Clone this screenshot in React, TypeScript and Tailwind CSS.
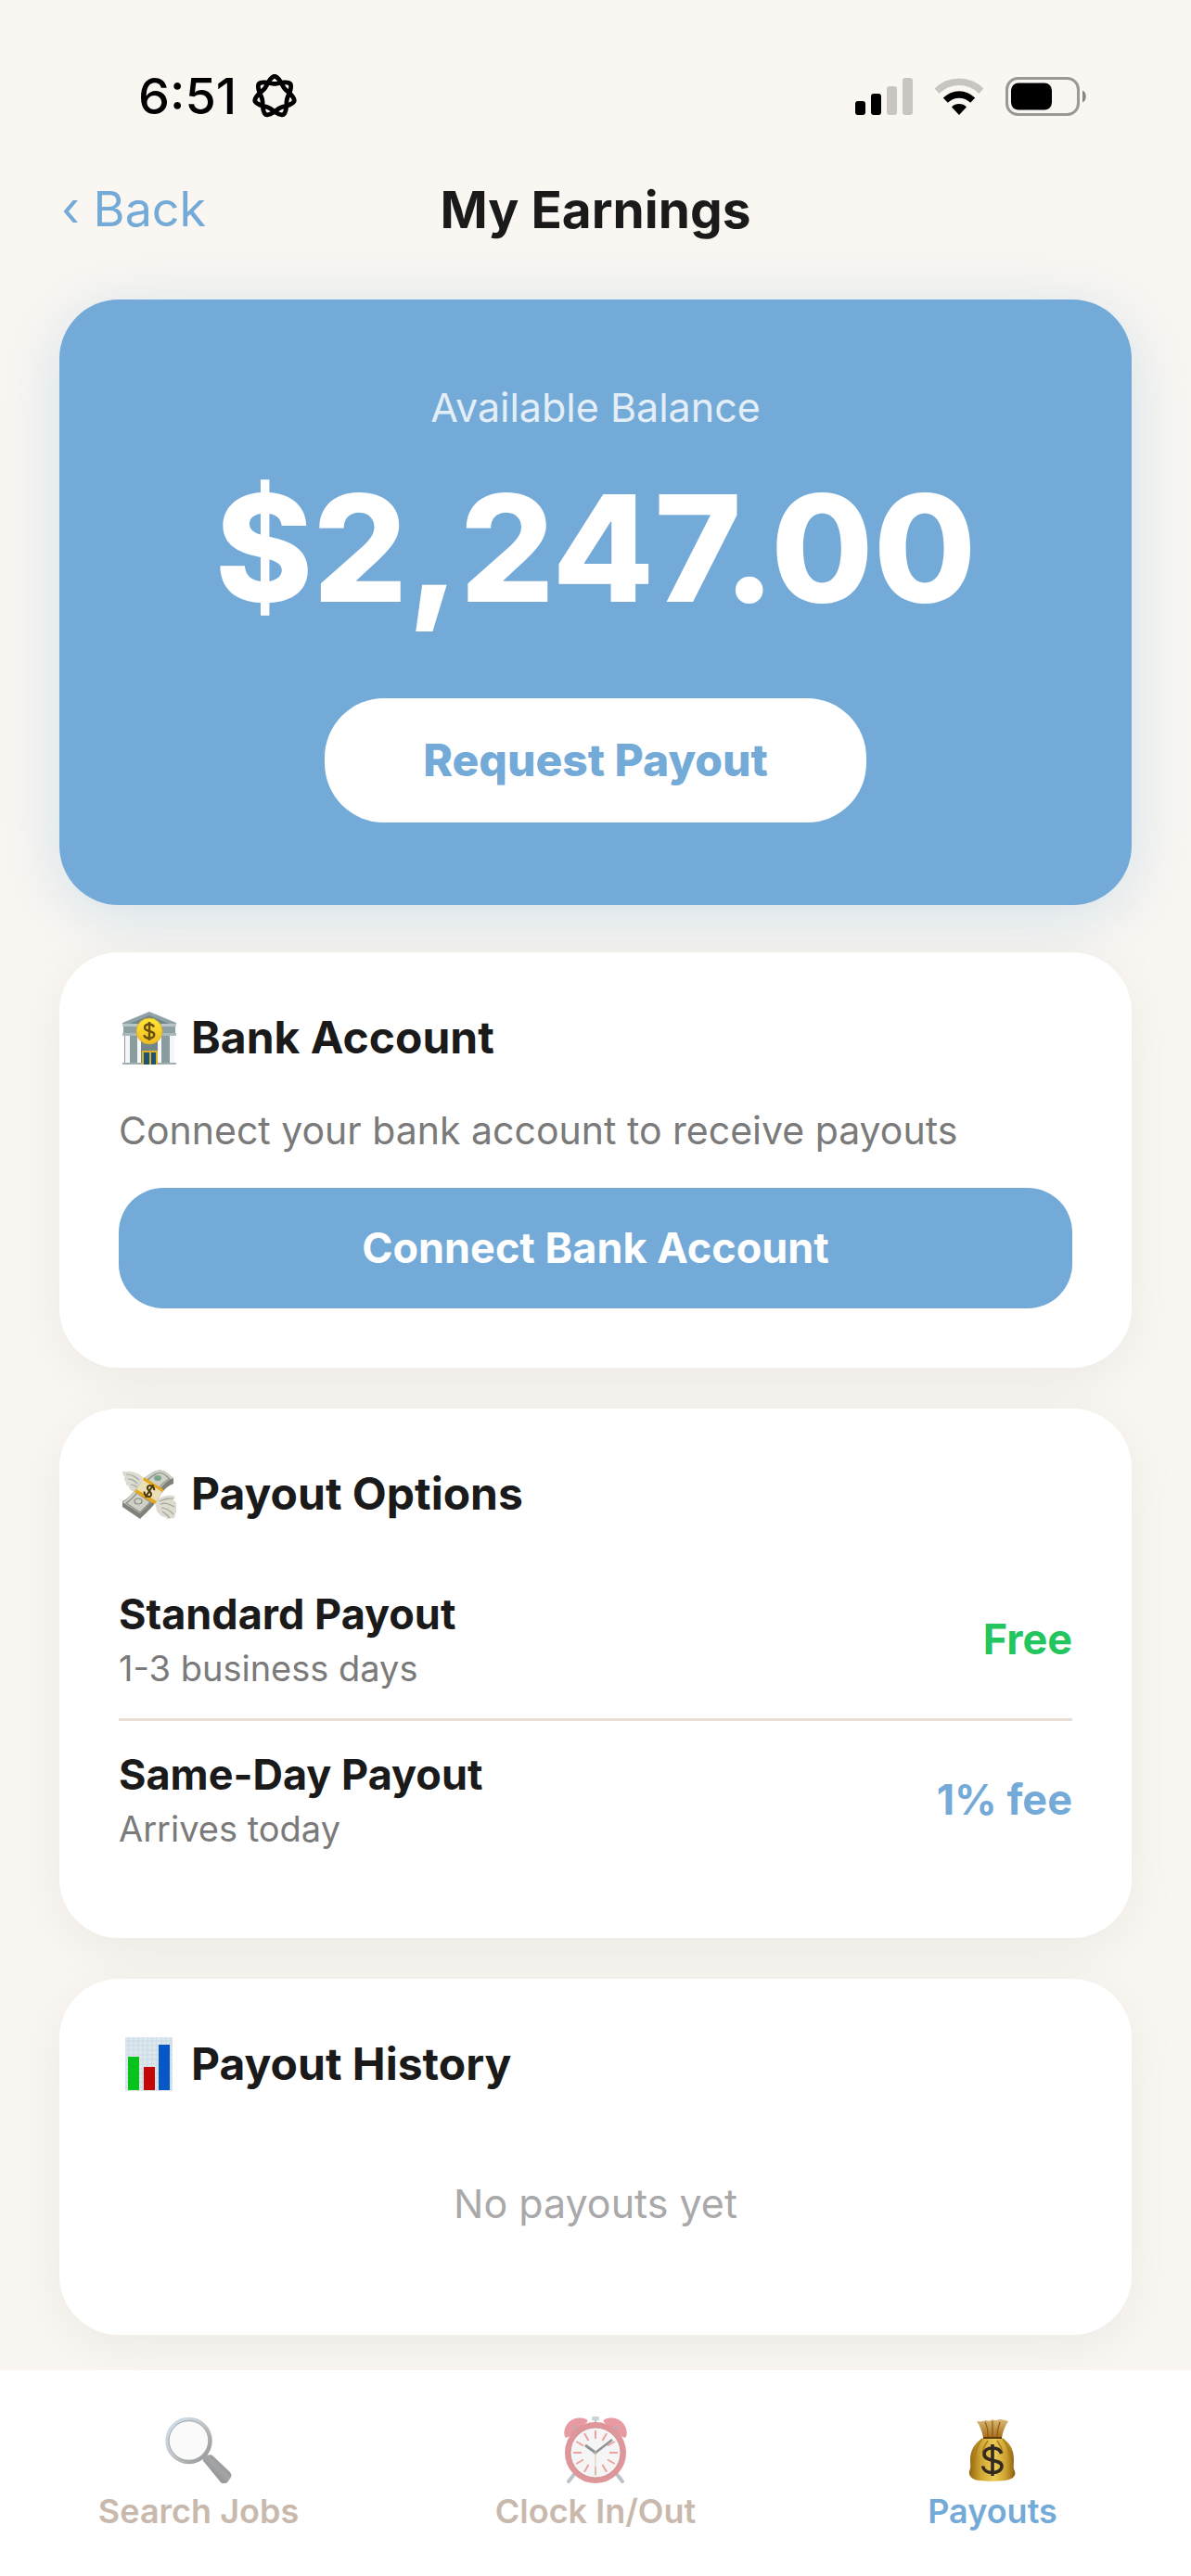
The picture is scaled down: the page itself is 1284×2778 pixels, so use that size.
import type { ReactNode } from 'react';
import { clsx } from 'clsx';

interface PayoutOption {
  title: string;
  detail: string;
  price: string;
  free?: boolean;
}

const payoutOptions: PayoutOption[] = [
  { title: 'Standard Payout', detail: '1-3 business days', price: 'Free', free: true },
  { title: 'Same-Day Payout', detail: 'Arrives today', price: '1% fee' },
];

// seven-lobed closed knot, two turns around the centre
const knotPath =
  Array.from({ length: 281 }, (_, i) => {
    const t = (i / 280) * Math.PI * 4;
    const phase = 3.5 * t;
    const angle = t - 0.24 * Math.sin(phase) - Math.PI / 2;
    const r = 18.6 + 4 * Math.cos(phase) - 0.9 * Math.cos(2 * phase);
    return `${i === 0 ? 'M' : 'L'}${(25 + r * Math.cos(angle)).toFixed(2)} ${(25 + r * Math.sin(angle)).toFixed(2)}`;
  }).join('') + 'Z';

function KnotIcon() {
  return (
    <svg viewBox="0 0 50 50" className="size-[50px]" aria-hidden="true">
      <path d={knotPath} fill="none" stroke="#000" strokeWidth="4.8" strokeLinejoin="round" />
    </svg>
  );
}

function SignalIcon() {
  return (
    <svg viewBox="0 0 62 40" className="h-10 w-[62px]" aria-hidden="true">
      <rect x="0" y="25" width="11" height="15" rx="3" />
      <rect x="17" y="17" width="11" height="23" rx="3" />
      <rect x="34" y="9" width="11" height="31" rx="3" fill="#c9c6c1" />
      <rect x="51" y="0" width="11" height="40" rx="3" fill="#c9c6c1" />
    </svg>
  );
}

function WifiIcon() {
  return (
    <svg viewBox="0 0 54 40" className="h-10 w-[54px]" aria-hidden="true">
      <path d="M0.6 11.4a37.4 37.4 0 0 1 52.8 0l-5 5.6a30 30 0 0 0-42.8 0z" fill="#c9c6c1" />
      <path d="M9.8 21.4a24.4 24.4 0 0 1 34.4 0l-5 5.4a17 17 0 0 0-24.4 0z" />
      <path d="M19 31.4a11.4 11.4 0 0 1 16 0L27 40z" />
    </svg>
  );
}

function BatteryIcon() {
  return (
    <svg viewBox="0 0 88 42" className="h-[42px] w-[88px]" aria-hidden="true">
      <rect x="1.5" y="1.5" width="77" height="39" rx="12" fill="none" stroke="#9b9995" strokeWidth="3" />
      <rect x="6" y="6.5" width="44" height="29" rx="8" />
      <path d="M83 14.500c5 2 5 11 0 13z" fill="#8a8884" />
    </svg>
  );
}

function BankIcon() {
  return (
    <svg viewBox="0 0 60 60" className="size-[60px]" aria-hidden="true">
      <defs>
        <linearGradient id="bankCoin" x1="0" y1="0" x2="0" y2="1">
          <stop offset="0" stopColor="#ffe83a" />
          <stop offset="1" stopColor="#eebb22" />
        </linearGradient>
      </defs>
      <path d="M31 2 60 14v4H2v-4z" fill="#8fa3a6" />
      <path d="M31 6 52 15H10z" fill="#6f8588" />
      <path d="M2 15h58v3H2z" fill="#b9c6c8" />
      <path d="M3 18h56v9H3z" fill="#8da1a4" />
      <path d="M2 25h58v3H2z" fill="#a9b8ba" />
      <path d="M4 28h54v30H4z" fill="#8a9c9f" />
      <path d="M22 28h18v30H22z" fill="#71868a" />
      <path d="M5 28h5v30H5zM18 28h4v30h-4zM40 28h4v30h-4zM53 28h5v30h-5z" fill="#f4f6f7" />
      <path d="M2 57h58v2H2z" fill="#9fb0b2" />
      <path d="M23 44h17v15H23z" fill="#e0b221" />
      <path d="M25 46h6v13h-6zM33 46h5v13h-5z" fill="#1d5379" />
      <circle cx="31" cy="23" r="14" fill="url(#bankCoin)" stroke="#dcae2a" strokeWidth="1" />
      <path d="M31 13v20M36 18.500c-1-2-2.800-3-5-3-3 0-5 1.600-5 3.700 0 5 10.300 2.600 10.300 7.600 0 2.200-2.200 3.900-5.300 3.900-2.800 0-5-1.200-5.700-3.600" fill="none" stroke="#6b4d0c" strokeWidth="2.400" />
    </svg>
  );
}

function FlyingMoneyIcon() {
  return (
    <svg viewBox="0 0 60 60" className="size-[60px]" aria-hidden="true">
      <path d="M24 12C18 6 10 5 2 6c0 3 1 5 3 6-2 1-1 4 1 5-1 2 0 4 3 5 0 3 3 5 6 6l5 1z" fill="#dcdbd2" />
      <path d="M6 9c6 0 9 2 14 6M8 14c5 0 7 2 10 5M11 20c3 0 5 1 7 3" fill="none" stroke="#a5a498" strokeWidth="1.200" />
      <path d="M37 38c5-4 13-8 21-6 1 3 0 4-2 4 5 3 5 6 4 8 1 4 0 6-1 7 0 5-2 6-4 5-3 2-6 1-7-1-4 0-7-4-9-6z" fill="#dddbd0" />
      <path d="M42 38c6-3 9-3 15-3M43 41c6-2 9 0 15 3M44 45c5 0 9 3 13 7M45 49c3 2 6 4 8 7" fill="none" stroke="#a5a498" strokeWidth="1.200" />
      <path d="M24 15C31 8 39 3 45 5c6 1 8 6 12 8v6c-6 2-12 8-15 14-5 9-13 16-21 24L2 44v-6c8-3 15-15 22-23z" fill="#81817c" />
      <path d="M24 15C31 8 39 3 45 5c6 1 8 6 12 8-7 2-12 8-16 14-5 9-12 16-20 24L2 39c8-4 15-16 22-24z" fill="#cfd0c6" />
      <path d="M29 15c6-5 11-9 16-7 4 1 5 4 8 6-6 2-9 6-12 10zM18 29l14 10-11 11L6 40c5-3 8-7 12-11z" fill="none" stroke="#8e9088" strokeWidth="1.200" />
      <ellipse cx="40" cy="13" rx="4" ry="3" fill="#79a68c" />
      <ellipse cx="19" cy="38" rx="4" ry="3" fill="none" stroke="#84887e" strokeWidth="1.200" />
      <path d="M25 13 46 26 37 41 16 27z" fill="#eadfb5" />
      <path d="m25 12 21 13-1 3-21-13zM17 25l22 13-2 3-22-13z" fill="#e6a71b" />
      <g transform="rotate(32 31 27)">
        <path d="M31 19v16M35 23.500c-1-2-2.400-2.500-4-2.500-2.300 0-4 1.200-4 3 0 4 8 2 8 6 0 1.800-1.700 3-4 3-2.200 0-3.600-1-4.200-2.800" fill="none" stroke="#4c390e" strokeWidth="2" />
      </g>
    </svg>
  );
}

function ChartIcon() {
  return (
    <svg viewBox="0 0 60 60" className="size-[60px]" aria-hidden="true">
      <path d="M5 1h51v58H5z" fill="#dce7ee" />
      <path
        d="M9 1v58M14 1v58M19 1v58M24 1v58M29 1v58M34 1v58M39 1v58M44 1v58M49 1v58M54 1v58M5 5h51M5 10h51M5 15h51M5 20h51M5 25h51M5 30h51M5 35h51M5 40h51M5 45h51M5 50h51M5 55h51"
        stroke="#c5d5df"
        strokeWidth="0.700"
      />
      <path d="M8 22h12v36H8z" fill="#08c31c" />
      <path d="M25 33h12v25H25z" fill="#c40606" />
      <path d="M41 9h12v49H41z" fill="#0558c5" />
    </svg>
  );
}

function MagnifierIcon() {
  return (
    <svg viewBox="0 0 72 72" className="size-[72px]" aria-hidden="true">
      <defs>
        <linearGradient id="lensRim" x1="0" y1="0" x2="1" y2="1">
          <stop offset="0" stopColor="#cfe2f5" />
          <stop offset="0.500" stopColor="#c3c6c8" />
          <stop offset="1" stopColor="#8f9192" />
        </linearGradient>
        <linearGradient id="lensHandle" x1="0" y1="1" x2="1" y2="0">
          <stop offset="0" stopColor="#7d7f80" />
          <stop offset="0.550" stopColor="#a3a5a6" />
          <stop offset="1" stopColor="#77797a" />
        </linearGradient>
      </defs>
      <path d="m40 45 5-5 5 5-5 5z" fill="#b9bbbc" />
      <circle cx="25.500" cy="26" r="23" fill="#fafafa" stroke="url(#lensRim)" strokeWidth="4.500" />
      <circle cx="25.500" cy="26" r="21.500" fill="none" stroke="#a8aaab" strokeWidth="1" />
      <path d="M42 49c-2-2-1-3 0-4l4-3c2-1 4-1 6 1l17 16c3 3 3 5 1 8l-3 4c-2 2-5 2-7 0z" fill="url(#lensHandle)" />
    </svg>
  );
}

const clockTicks = Array.from({ length: 12 }, (_, i) => i * 30);

function ClockIcon() {
  return (
    <svg viewBox="0 0 72 72" className="size-[72px]" aria-hidden="true">
      <path d="M14 61 7 70M58 61l7 9" stroke="#bcc4cb" strokeWidth="4" strokeLinecap="round" />
      <path d="M36 3v8" stroke="#b5bcc2" strokeWidth="2" />
      <rect x="32" y="0" width="8" height="4.500" rx="1.500" fill="#ccd3d9" />
      <path d="M3 22C-1 10 12-3 26 3c2 1 2 2 0 4L7 22c-2 1-3 1-4 0zM69 22C73 10 60-3 46 3c-2 1-2 2 0 4l19 15c2 1 3 1 4 0z" fill="#e79aa1" />
      <path d="m13 11 5 5M59 11l-5 5" stroke="#aab3ba" strokeWidth="2.500" />
      <circle cx="36" cy="39" r="30" fill="#f5f5f5" stroke="#df969b" strokeWidth="6" />
      <circle cx="36" cy="39" r="27" fill="none" stroke="#c98589" strokeWidth="0.800" />
      {clockTicks.map((deg) => (
        <path key={deg} d="M36 15v9" stroke="#efa0a0" strokeWidth="2" transform={`rotate(${deg} 36 39)`} />
      ))}
      <path d="M36 39v25" stroke="#d8cdb0" strokeWidth="1" />
      <path d="M36 39 25 31" stroke="#8f9496" strokeWidth="3" />
      <path d="M36 39 54 25" stroke="#8f9496" strokeWidth="2.500" />
      <circle cx="36" cy="39" r="1.800" fill="#b1aa98" />
    </svg>
  );
}

function MoneyBagIcon() {
  return (
    <svg viewBox="0 0 72 72" className="size-[72px]" aria-hidden="true">
      <defs>
        <linearGradient id="bagBody" x1="0" y1="0" x2="1" y2="0">
          <stop offset="0" stopColor="#946510" />
          <stop offset="0.250" stopColor="#cfa533" />
          <stop offset="0.550" stopColor="#ebcb55" />
          <stop offset="0.800" stopColor="#cda131" />
          <stop offset="1" stopColor="#875a10" />
        </linearGradient>
        <linearGradient id="bagNeck" x1="0" y1="0" x2="0" y2="1">
          <stop offset="0" stopColor="#d9b878" />
          <stop offset="1" stopColor="#a86d18" />
        </linearGradient>
      </defs>
      <path d="M19 5c4 1 7 0 10-1 3 1 4 1 7-1 3 2 5 1 7 0 4 0 6 1 10 2-4 6-6 12-7 18H26C25 17 23 11 19 5z" fill="url(#bagNeck)" />
      <path d="M28 6c3 5 3 10 3 16M36 5v17M44 6c-2 5-3 10-3 16" fill="none" stroke="#8a5c14" strokeWidth="1.200" />
      <path d="M26 23h20c9 5 13 13 13 24 0 6-1 8 1 12 2 6-4 9-10 10-9 1-20 1-29 0-7-1-11-5-10-10 2-4 1-7 1-12 0-11 5-19 14-24z" fill="url(#bagBody)" />
      <path d="M25 24c-7 8-9 20-10 36M47 24c7 8 9 20 10 36M31 26c-3 4-5 8-6 13M41 26c3 4 5 8 6 13" fill="none" stroke="#a87b1c" strokeWidth="1.500" />
      <path d="M26 23h20" stroke="#5d3b0c" strokeWidth="2" />
      <path d="M36 30v34M45.500 40c-1-4-4.500-6-9.500-6s-9 2.500-9 6.500c0 9 19 5 19 13 0 4-4 7-10 7-5.500 0-9.500-2-10.500-7" fill="none" stroke="#33291f" strokeWidth="3.600" />
    </svg>
  );
}

function Card({ icon, title, children }: { icon: ReactNode; title: string; children: ReactNode }) {
  return (
    <section className="rounded-[64px] bg-white px-16 pt-[62px] pb-16 shadow-[0_12px_60px_rgba(0,0,0,0.06)]">
      <h2 className="mb-[42px] flex items-center gap-4 pl-0.5 text-[48px] leading-[58px] font-bold">
        {icon}
        {title}
      </h2>
      {children}
    </section>
  );
}

function Tab({ icon, label, active }: { icon: ReactNode; label: string; active?: boolean }) {
  return (
    <a
      href="#"
      aria-current={active ? 'page' : undefined}
      className={clsx(
        'flex flex-col items-center gap-2 text-[36px] leading-[44px] font-semibold',
        active ? 'text-[#74aad7]' : 'text-[#c9b8ac]',
      )}
    >
      {icon}
      {label}
    </a>
  );
}

export default function App() {
  return (
    <div className="flex min-h-screen flex-col bg-[#faf7f2] font-['Inter',sans-serif] text-[#1a1a1a]">
      <div className="flex items-center justify-between pt-[72px] pr-[112px] pl-[149px]">
        <div className="flex items-center gap-4 text-[54px] leading-[64px] font-medium text-black">
          6:51
          <KnotIcon />
        </div>
        <div className="flex items-center gap-[23px]">
          <SignalIcon />
          <WifiIcon />
          <BatteryIcon />
        </div>
      </div>

      <header className="grid grid-cols-[1fr_auto_1fr] items-center px-[66px] pt-[54px] pb-[61px]">
        <button type="button" className="justify-self-start text-[52px] leading-[72px] text-[#74aad7]">
          ‹ Back
        </button>
        <h1 className="text-[55px] leading-[72px] font-bold">My Earnings</h1>
      </header>

      <main className="flex flex-1 flex-col px-16 pb-[38px]">
        <section className="flex flex-col items-center rounded-[64px] bg-[#74aad7] pt-[88px] pb-[89px] shadow-[0_12px_72px_rgba(116,170,215,0.3)]">
          <p className="text-[43px] leading-[56px] text-white/80">Available Balance</p>
          <p className="mt-7 text-[160px] leading-[192px] font-extrabold text-white">$2,247.00</p>
          <button
            type="button"
            className="mt-[66px] rounded-[64px] bg-white px-[106px] py-[38px] text-[48px] leading-[58px] font-extrabold text-[#74aad7]"
          >
            Request Payout
          </button>
        </section>

        <div className="mt-[51px] flex flex-col gap-11">
          <Card icon={<BankIcon />} title="Bank Account">
            <p className="text-[41px] leading-[56px] text-[#7a7a7a]">Connect your bank account to receive payouts</p>
            <button
              type="button"
              className="mt-[34px] w-full rounded-[48px] bg-[#74aad7] py-[37px] text-[45px] leading-[56px] font-bold text-white"
            >
              Connect Bank Account
            </button>
          </Card>

          <Card icon={<FlyingMoneyIcon />} title="Payout Options">
            <ul className="divide-y-3 divide-[#e8ddd5]">
              {payoutOptions.map((option) => (
                <li key={option.title} className="flex items-center justify-between py-[30px]">
                  <div>
                    <p className="text-[45px] leading-[56px] font-bold">{option.title}</p>
                    <p className="mt-1.5 text-[38px] leading-[48px] text-[#7a7a7a]">{option.detail}</p>
                  </div>
                  <span
                    className={clsx(
                      'text-[45px] leading-[56px] font-bold',
                      option.free ? 'text-[#22c55e]' : 'text-[#74aad7]',
                    )}
                  >
                    {option.price}
                  </span>
                </li>
              ))}
            </ul>
          </Card>

          <Card icon={<ChartIcon />} title="Payout History">
            <p className="py-[50px] text-center text-[43px] leading-[56px] text-[#a9a9a9]">No payouts yet</p>
          </Card>
        </div>
      </main>

      <nav className="grid grid-cols-3 bg-white pt-[50px] pb-12">
        <Tab icon={<MagnifierIcon />} label="Search Jobs" />
        <Tab icon={<ClockIcon />} label="Clock In/Out" />
        <Tab icon={<MoneyBagIcon />} label="Payouts" active />
      </nav>
    </div>
  );
}
